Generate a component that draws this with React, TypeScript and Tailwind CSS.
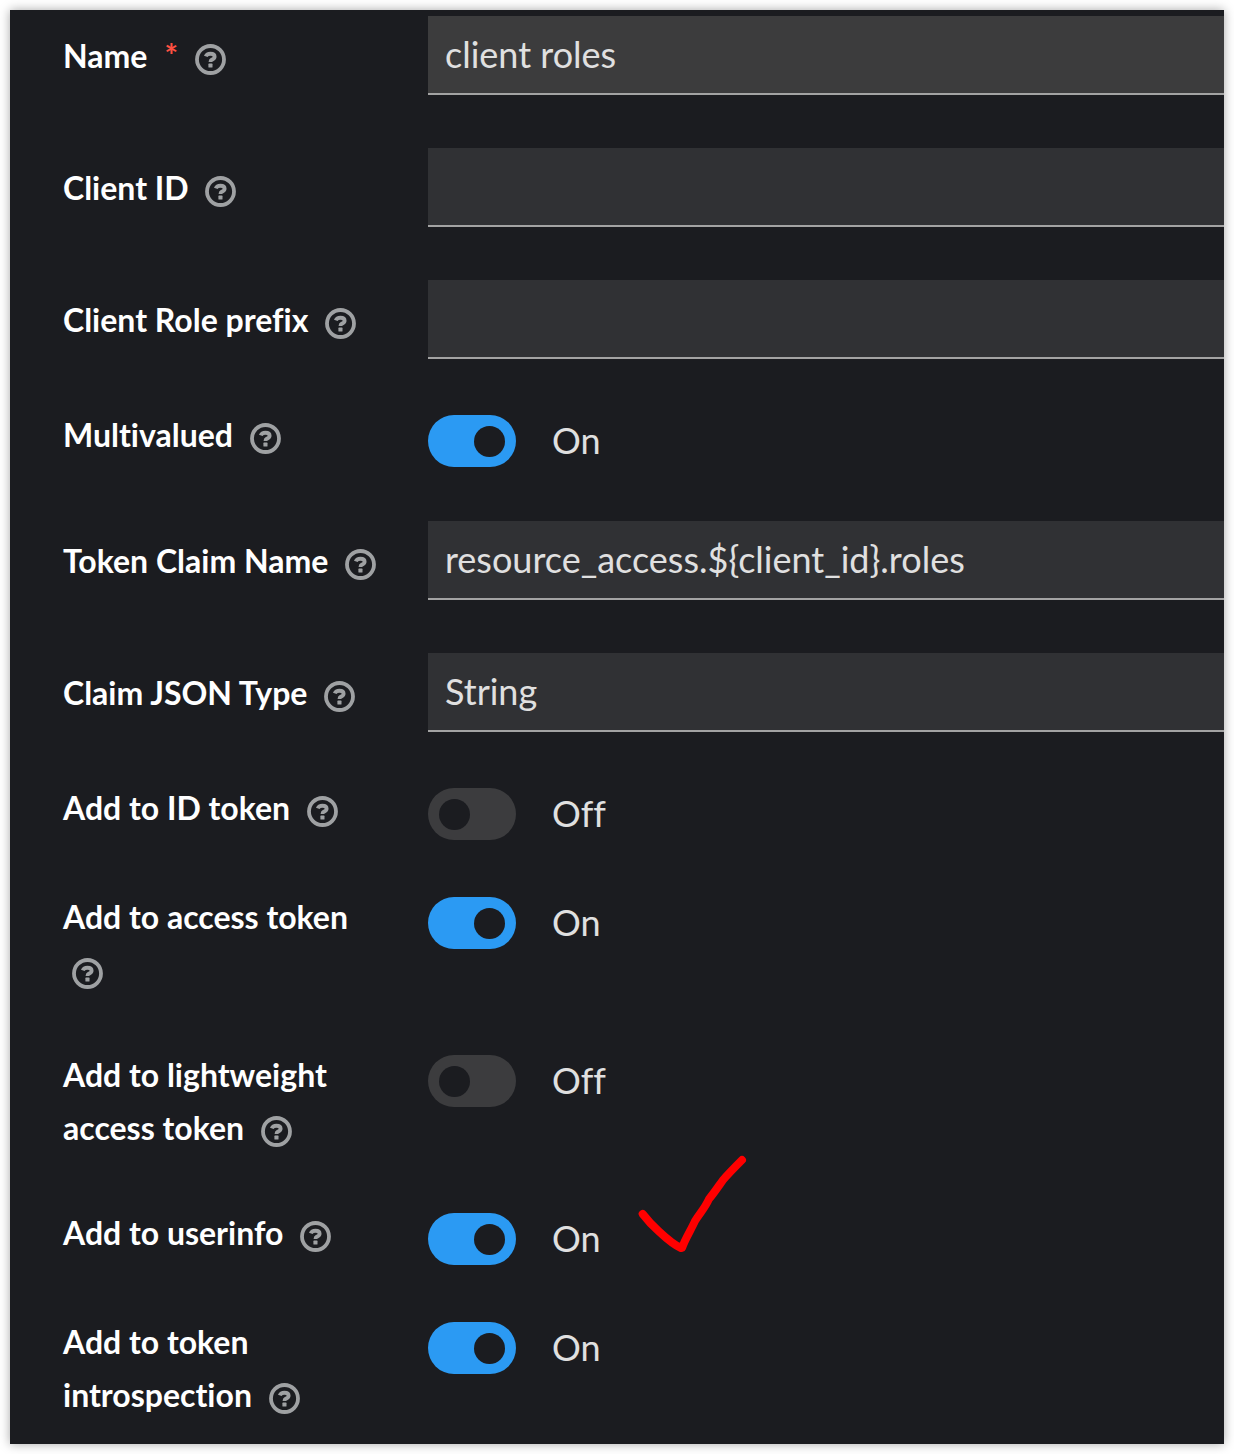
import { useState, type ReactNode } from "react";

function HelpButton({ topic }: { topic: string }) {
  return (
    <button
      type="button"
      aria-label={`Help for ${topic}`}
      className="mx-[9px] inline-block size-[31px] translate-y-[7px] align-baseline text-[#9fa1a3]"
    >
      <svg viewBox="0 0 31 31" className="block size-[31px]" fill="none" aria-hidden="true">
        <circle cx="15.5" cy="15.5" r="13.5" stroke="currentColor" strokeWidth="3.8" />
        <path
          d="M10.8 12.4C11.6 10.4 13.4 9.7 15.4 9.7C17.9 9.7 19.6 10.8 19.6 12.7C19.6 14.6 18.2 15 17 15.6C16 16.1 15.5 16.5 15.5 17.9"
          stroke="currentColor"
          strokeWidth="3.9"
        />
        <rect x="13.4" y="19.6" width="4.1" height="4" rx="0.6" fill="currentColor" />
      </svg>
    </button>
  );
}

function LabelText({ id, text, required }: { id: string; text: string; required?: boolean }) {
  return (
    <div className="w-[327px] shrink-0 text-[32px] leading-[53px] font-bold text-white">
      <label htmlFor={id}>
        {text}
        {required && (
          <span aria-hidden="true" className="ml-[17px] text-[32px] leading-none text-[#fe5142]">
            *
          </span>
        )}
      </label>{" "}
      <HelpButton topic={text} />
    </div>
  );
}

function FieldRow({
  id,
  text,
  required,
  children,
}: {
  id: string;
  text: string;
  required?: boolean;
  children: ReactNode;
}) {
  return (
    <div className="flex items-start gap-[38px] pt-1">
      <div className="pt-[13px]">
        <LabelText id={id} text={text} required={required} />
      </div>
      {children}
    </div>
  );
}

const fieldClass =
  "h-[79px] min-w-0 flex-1 appearance-none rounded-none border-b-2 border-[#a3a3a3] bg-[#303134] px-[17px] pb-[2px] text-[36px] text-[#e0e0e0] outline-none";

function SwitchRow({ id, text, initial }: { id: string; text: string; initial: boolean }) {
  const [on, setOn] = useState(initial);
  return (
    <div className="flex min-h-[60px] items-start gap-[38px] pb-[3px]">
      <LabelText id={id} text={text} />
      <div className="-mb-[3px] flex items-center gap-9 pt-[7px]">
        <input
          id={id}
          type="checkbox"
          role="switch"
          checked={on}
          onChange={(e) => setOn(e.target.checked)}
          className="flex h-[52px] w-[88px] shrink-0 appearance-none items-center rounded-full bg-[#3c3c3e] px-[11px] before:size-[31px] before:rounded-full before:bg-[#1b1c20] before:content-[''] checked:justify-end checked:bg-[#2b9af3]"
        />
        <span className="pb-[2px] text-[36px] leading-[50px] text-[#e0e0e0]">{on ? "On" : "Off"}</span>
      </div>
    </div>
  );
}

function CheckMark() {
  return (
    <svg
      viewBox="0 0 140 130"
      className="pointer-events-none absolute top-[-66px] left-[557px] h-[130px] w-[140px]"
      fill="none"
      aria-hidden="true"
    >
      <path
        d="M22.7 74C28 81 34 87 39 91.5C46 98 54 105 61 108L62 108C65 99 71 90 75 81C80 73 85 68 89 59C94 53 98 47 103 40C109 33 116 26 122 20"
        stroke="#ff0000"
        strokeWidth="8"
        strokeLinecap="round"
        strokeLinejoin="round"
      />
    </svg>
  );
}

export default function App() {
  return (
    <main className="min-h-screen bg-white p-[10px] font-['Lato',sans-serif] [font-variant-ligatures:none]">
      <form
        className="flex flex-col gap-[49px] overflow-hidden bg-[#1b1c20] pt-[2px] pb-[20px] pl-[53px] shadow-[0_0_10px_rgba(0,0,0,0.35)]"
        onSubmit={(e) => e.preventDefault()}
      >
        <FieldRow id="name" text="Name" required>
          <input
            id="name"
            type="text"
            required
            defaultValue="client roles"
            className="h-[79px] min-w-0 flex-1 appearance-none rounded-none border-b-2 border-[#a3a3a3] bg-[#3c3c3d] px-[17px] pb-[2px] text-[36px] text-[#e0e0e0] outline-none"
          />
        </FieldRow>
        <FieldRow id="client-id" text="Client ID">
          <input id="client-id" type="text" className={fieldClass} />
        </FieldRow>
        <FieldRow id="role-prefix" text="Client Role prefix">
          <input id="role-prefix" type="text" className={fieldClass} />
        </FieldRow>
        <SwitchRow id="multivalued" text="Multivalued" initial={true} />
        <FieldRow id="claim-name" text="Token Claim Name">
          <input
            id="claim-name"
            type="text"
            defaultValue="resource_access.${client_id}.roles"
            className={fieldClass}
          />
        </FieldRow>
        <FieldRow id="json-type" text="Claim JSON Type">
          <select id="json-type" defaultValue="String" className={fieldClass}>
            <option>String</option>
            <option>long</option>
            <option>int</option>
            <option>boolean</option>
            <option>JSON</option>
          </select>
        </FieldRow>
        <SwitchRow id="id-token" text="Add to ID token" initial={false} />
        <SwitchRow id="access-token" text="Add to access token" initial={true} />
        <SwitchRow id="lightweight-token" text="Add to lightweight access token" initial={false} />
        <div className="relative">
          <SwitchRow id="userinfo" text="Add to userinfo" initial={true} />
          <CheckMark />
        </div>
        <SwitchRow id="introspection" text="Add to token introspection" initial={true} />
      </form>
    </main>
  );
}
